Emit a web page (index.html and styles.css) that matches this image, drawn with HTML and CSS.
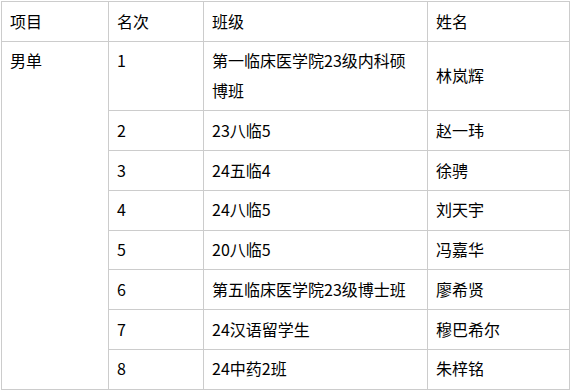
FILE: index.html
```html
<!DOCTYPE html>
<html lang="zh-CN">
<head>
<meta charset="utf-8">
<link rel="stylesheet" href="styles.css">
</head>
<body>
<table class="roster">
  <colgroup>
    <col class="c1"><col class="c2"><col class="c3"><col class="c4">
  </colgroup>
  <tr><td>项目</td><td>名次</td><td>班级</td><td>姓名</td></tr>
  <tr><td class="top" rowspan="8">男单</td><td class="top">1</td><td>第一临床医学院23级内科硕博班</td><td>林岚辉</td></tr>
  <tr><td>2</td><td>23八临5</td><td>赵一玮</td></tr>
  <tr><td>3</td><td>24五临4</td><td>徐骋</td></tr>
  <tr><td>4</td><td>24八临5</td><td>刘天宇</td></tr>
  <tr><td>5</td><td>20八临5</td><td>冯嘉华</td></tr>
  <tr><td>6</td><td>第五临床医学院23级博士班</td><td>廖希贤</td></tr>
  <tr><td>7</td><td>24汉语留学生</td><td>穆巴希尔</td></tr>
  <tr><td>8</td><td>24中药2班</td><td>朱梓铭</td></tr>
</table>
</body>
</html>
```
FILE: styles.css
```css
html, body {
  margin: 0;
  padding: 0;
  background: #fff;
}
body {
  padding: 1px 0 0 1px;
}
.roster {
  border-collapse: collapse;
  table-layout: fixed;
  width: 568px;
  font-family: "Noto Sans CJK SC", "Noto Sans", sans-serif;
  font-size: 16px;
  line-height: 29.75px;
  color: #000;
}
.c1 { width: 107px; }
.c2 { width: 95px; }
.c3 { width: 224px; }
.c4 { width: 142px; }
.roster td {
  border: 1px solid #cccccc;
  padding: 4.5px 8px;
  vertical-align: middle;
  text-align: left;
}
.roster td.top {
  vertical-align: top;
}
```
